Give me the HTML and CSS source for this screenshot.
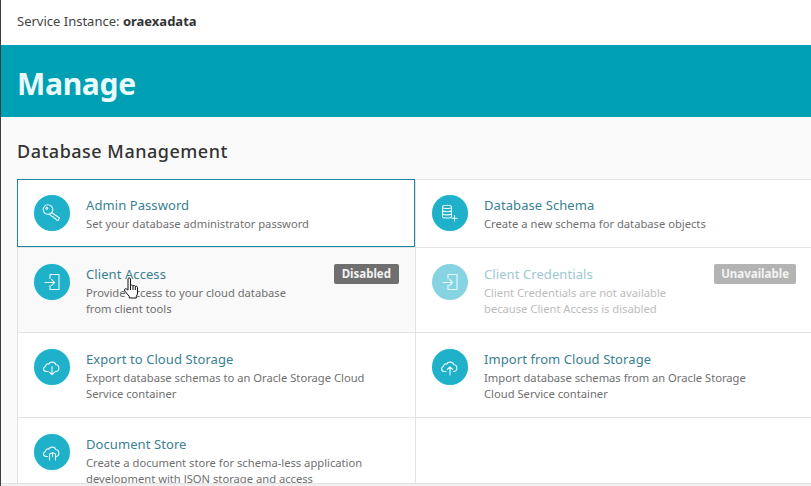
FILE: index.html
```html
<!DOCTYPE html>
<html lang="en">
<head>
<meta charset="utf-8">
<title>Manage</title>
<link rel="stylesheet" href="styles.css">
</head>
<body>
<div class="page">
  <div class="instance">Service Instance: <b>oraexadata</b></div>
  <header class="banner"><h1>Manage</h1></header>
  <main class="content">
    <h2>Database Management</h2>
    <div class="grid">
      <a class="card selected">
        <span class="disc"><svg viewBox="0 0 36 36"><circle cx="14" cy="14.500" r="4.800"/><path d="M17.500 17.500l8 5.500-1.500 2.500-1.700-.6-1-1.700-1.300-.1-.6-1.300-1.200-.2-3.200-2.600"/><circle cx="12.800" cy="13.300" r="1"/></svg></span>
        <span class="text"><span class="title">Admin Password</span><span class="desc">Set your database administrator password</span></span>
      </a>
      <a class="card">
        <span class="disc"><svg viewBox="0 0 36 36"><path d="M10.500 12c0-2.400 9-2.400 9 0v9.500c0 2-9 2-9 0zM10.500 12c0 2 9 2 9 0M10.500 15.800c1.500 1.200 7.500 1.200 9 0M10.500 19c1.500 1.200 7.500 1.200 9 0"/><path d="M22.500 20.500v5.500M19.800 23.200h5.500"/></svg></span>
        <span class="text"><span class="title">Database Schema</span><span class="desc">Create a new schema for database objects</span></span>
      </a>
      <a class="card hovered tall">
        <span class="disc"><svg viewBox="0 0 36 36"><path d="M16 10.500h9v15h-9M16 10.500v4M16 21.500v4"/><path d="M11 18.500h9.500M17.500 15.500l3 3-3 3"/></svg></span>
        <span class="text"><span class="title">Client Access</span><span class="desc">Provide access to your cloud database<br>from client tools</span></span>
        <span class="badge">Disabled</span>
      </a>
      <a class="card tall off">
        <span class="disc"><svg viewBox="0 0 36 36"><path d="M16 10.500h9v15h-9M16 10.500v4M16 21.500v4"/><path d="M11 18.500h9.500M17.500 15.500l3 3-3 3"/></svg></span>
        <span class="text"><span class="title">Client Credentials</span><span class="desc">Client Credentials are not available<br>because Client Access is disabled</span></span>
        <span class="badge">Unavailable</span>
      </a>
      <a class="card tall">
        <span class="disc"><svg viewBox="0 0 36 36"><path d="M14 22.500h-1.500c-3.500 0-3.800-4.200-1-5 0-2.300 2-3 3.200-2.300 1-2.800 6.200-3 7.200.6 3.200-.2 4.500 5.600.6 6.700H21.500"/><path d="M18 17.500v8M15.300 23l2.700 2.700 2.700-2.700"/></svg></span>
        <span class="text"><span class="title">Export to Cloud Storage</span><span class="desc">Export database schemas to an Oracle Storage Cloud<br>Service container</span></span>
      </a>
      <a class="card tall">
        <span class="disc"><svg viewBox="0 0 36 36"><path d="M14 22.500h-1.500c-3.500 0-3.800-4.200-1-5 0-2.300 2-3 3.200-2.300 1-2.800 6.200-3 7.200.6 3.200-.2 4.500 5.600.6 6.700H21.500"/><path d="M18 26v-8M15.300 20.500L18 17.800l2.700 2.700"/></svg></span>
        <span class="text"><span class="title">Import from Cloud Storage</span><span class="desc">Import database schemas from an Oracle Storage<br>Cloud Service container</span></span>
      </a>
      <a class="card tall">
        <span class="disc"><svg viewBox="0 0 36 36"><path d="M13.500 22.500h-1c-3.500 0-3.800-4.200-1-5 0-2.300 2-3 3.200-2.300 1-2.800 6.200-3 7.200.6 3.200-.2 4.500 5.600.6 6.700h-1"/><path d="M15.500 26v-6l3-1.500 3 1.500v6M18.500 18.500v4"/></svg></span>
        <span class="text"><span class="title">Document Store</span><span class="desc">Create a document store for schema-less application<br>development with JSON storage and access</span></span>
      </a>
      <div class="card tall empty"></div>
    </div>
  </main>
  <div class="bottom"></div>
  <svg class="cursor" viewBox="0 0 17 24"><path d="M5 2c0-1.500 2.500-1.500 2.500 0v6.500c1-.7 2-.5 2.500.3.800-.6 2-.3 2.300.6.900-.5 2.200 0 2.200 1.200v5.400c0 1.500-.7 2.500-1.200 3.500v1.500H6.300v-1.500L1.800 14c-1.200-1.700.7-3 2-1.900L5 13.200z"/><path d="M7.500 8.500v4.500M10 8.800v4.200M12.300 9.400v3.600"/></svg>
</div>
</body>
</html>
```
FILE: styles.css
```css
* { box-sizing: border-box; }
html, body { margin: 0; height: 100%; overflow: hidden; }
body { font-family: "Noto Sans", "Open Sans", sans-serif; color: #333; background: #fff; }
.page {
  position: relative;
  width: 811px;
  height: 486px;
  overflow: hidden;
  border-left: 1px solid #3a3f42;
  background: #fafafa;
}
.instance {
  height: 45px;
  background: #fff;
  padding: 12px 0 0 16px;
  font-size: 13px;
  line-height: 18px;
  color: #444;
}
.instance b { color: #333; font-weight: 700; }
.banner {
  height: 72px;
  background: #00a0b4;
  padding: 5px 16px 0;
  display: flex;
  align-items: center;
}
h1 { margin: 0; font-size: 30px; line-height: 40px; font-weight: 700; letter-spacing: -.3px; color: #e9fbfc; }
.content { padding: 0 0 0 16px; }
h2 {
  margin: 0;
  height: 62px;
  padding-top: 21px;
  font-size: 18px;
  line-height: 26px;
  font-weight: 500;
  letter-spacing: .5px;
  color: #333;
}
.grid {
  display: grid;
  grid-template-columns: 398px 395px;
  border-top: 1px solid #e3e3e3;
  border-left: 1px solid #e3e3e3;
  background: #fff;
}
.card {
  position: relative;
  display: flex;
  align-items: flex-start;
  height: 68px;
  padding: 15px 0 0 16px;
  gap: 16px;
  background: #fff;
  border-right: 1px solid #e3e3e3;
  border-bottom: 1px solid #e3e3e3;
}
.card:nth-child(2n) { border-right: 0; }
.card.tall { height: 85px; padding-top: 16px; }
.card.selected {
  margin: -1px 1px 1px -1px;
  height: 68px;
  border: 1px solid #1c86a0;
  box-shadow: 1px 1px 0 #e3e3e3;
}
.card.hovered { background: #f9f9f9; }
.disc {
  flex: none;
  width: 36px;
  height: 36px;
  border-radius: 50%;
  background: #1fb0ca;
  box-shadow: 0 0 1px #9feef5;
}
.disc svg { display: block; width: 36px; height: 36px; fill: none; stroke: #e6fafc; stroke-width: 1.100; stroke-linecap: round; stroke-linejoin: round; }
.text { display: flex; flex-direction: column; margin-top: 1px; }
.title { font-size: 13px; line-height: 18px; letter-spacing: .08px; color: #3a7f92; }
.desc { margin-top: 2px; font-size: 11.200px; line-height: 16px; color: #707070; }
.badge {
  position: absolute;
  top: 16px;
  right: 16px;
  height: 20px;
  padding: 0 8px;
  border-radius: 2px;
  background: #6f6f6f;
  color: #f3f3f3;
  font-size: 11.500px;
  line-height: 20px;
  font-weight: 700;
}
.off .disc { background: #86d4e2; box-shadow: none; }
.off .title { color: #9dc9d2; }
.off .desc { color: #bcbcbc; }
.off .badge { background: #b3b3b3; right: 15px; padding: 0 7px; }
.bottom {
  position: absolute;
  left: 0;
  right: 0;
  bottom: 0;
  height: 3px;
  background: #f0f0f0;
  border-top: 1px solid #e3e3e3;
}
.cursor {
  position: absolute;
  left: 122px;
  top: 277px;
  width: 17px;
  height: 24px;
  fill: #fff;
  stroke: #111;
  stroke-width: 1;
  stroke-linejoin: round;
}
```
